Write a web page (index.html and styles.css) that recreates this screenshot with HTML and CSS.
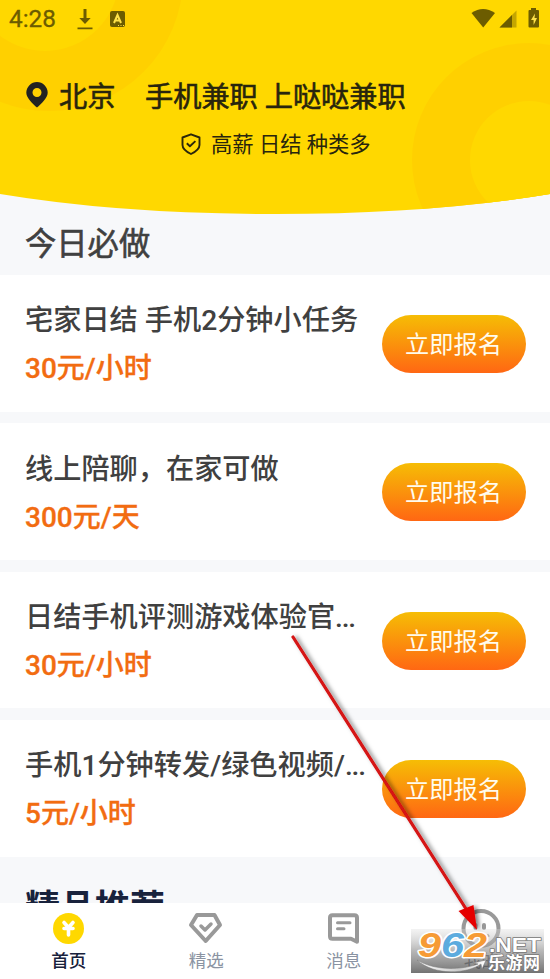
FILE: index.html
```html
<!DOCTYPE html>
<html lang="zh-CN">
<head>
<meta charset="utf-8">
<title>哒哒兼职</title>
<link rel="stylesheet" href="styles.css">
</head>
<body>
<div class="screen">
  <header class="hero">
    <svg class="hero-bg" viewBox="0 0 550 214" width="550" height="214">
      <defs><clipPath id="curve"><path d="M0 0H550V194Q430 214 275 214Q120 214 0 194Z"/></clipPath></defs>
      <g clip-path="url(#curve)">
        <rect width="550" height="214" fill="#ffd800"/>
        <circle cx="49" cy="-23" r="134" fill="#ffd000"/><circle cx="45" cy="-23" r="74" fill="#ffd800"/>
        <circle cx="529" cy="160" r="117" fill="#ffd000"/><circle cx="529" cy="160" r="59" fill="#ffd800"/>
      </g>
    </svg>
    <div class="status">
      <span class="clock">4:28</span>
      <svg class="download" width="16" height="21" viewBox="0 0 16 21" fill="#6c5c00"><path d="M6.500 0h3v9h4.200L8 15 2.300 9h4.200zM.5 18.500h15v1.700H.5z"/></svg>
      <svg class="badge" width="15" height="17" viewBox="0 0 15 17"><rect width="15" height="16" rx="2" fill="#6c5c00"/><path d="M4 12 7.500 4l3.500 8M5.200 9.500h4.600" fill="none" stroke="#ffe34a" stroke-width="2"/><path d="M8 14.500h1M10.500 14.500h1M13 14.500h1" stroke="#ffe34a"/></svg>
      <svg class="signals" width="70" height="21" viewBox="0 0 70 21" fill="#6c5c00"><path d="M.500 5Q12-3 24 5L12.200 19.500z"/><path opacity=".4" d="M28.500 19.500 45.500 2.500v17z"/><path d="M28.500 19.500 41 7v12.500z"/><path d="M60 0h5v2h2q1 0 1 1v15.500q0 1-1 1h-8.500q-1 0-1-1V3q0-1 1-1H60z"/><path d="M64 5.500 60 12h2.600v5l3.400-7h-2.500z" fill="#ffe34a"/></svg>
    </div>
    <div class="headline">
      <svg class="pin" width="22" height="26" viewBox="0 0 22 26"><path fill="#222" fill-rule="evenodd" d="M11 0a10.700 10.700 0 0 1 10.700 10.700C21.700 16 15 22 11 25.500 7 22 .3 16 .3 10.700A10.700 10.700 0 0 1 11 0zm0 6a4.500 4.500 0 1 0 0 9 4.500 4.500 0 0 0 0-9z"/></svg>
      <span class="city">北京</span><span class="slogan">手机兼职 上哒哒兼职</span>
    </div>
    <div class="subline">
      <svg width="20" height="22" viewBox="0 0 20 22" fill="none" stroke="#2b270b" stroke-width="1.900" stroke-linejoin="round"><path d="M10 1.300 18.500 4.500V12c0 4-4 6.800-8.500 9C5.500 18.800 1.500 16 1.500 12V4.500z"/><path d="m5.800 10.300 3.100 3 5.500-5.200"/></svg>
      <span>高薪 日结 种类多</span>
    </div>
  </header>
  <main>
    <h2 class="section">今日必做</h2>
    <div class="jobs">
      <article class="job"><div class="info"><h3>宅家日结 手机2分钟小任务</h3><p>30元/小时</p></div><button>立即报名</button></article>
      <article class="job"><div class="info"><h3>线上陪聊，在家可做</h3><p>300元/天</p></div><button>立即报名</button></article>
      <article class="job"><div class="info"><h3>日结手机评测游戏体验官<span class="dots">...</span></h3><p>30元/小时</p></div><button>立即报名</button></article>
      <article class="job"><div class="info"><h3>手机1分钟转发/绿色视频/<span class="dots">...</span></h3><p>5元/小时</p></div><button>立即报名</button></article>
    </div>
    <h2 class="featured">精品推荐</h2>
  </main>
  <nav class="tabs">
    <div class="tab active"><svg width="40" height="40" viewBox="0 0 40 40"><circle cx="19.500" cy="20.500" r="15.500" fill="#ffd800"/><path d="m15 14.500 4.500 5 4.500-5M15 20.500h9M19.500 20v7" fill="none" stroke="#fff" stroke-width="3.600" stroke-linecap="round"/></svg><span>首页</span></div>
    <div class="tab"><svg width="40" height="40" viewBox="0 0 40 40" fill="none" stroke="#999" stroke-width="4" stroke-linejoin="round"><path d="M11 7h17.500L34 17 19.700 33 5 17z"/><path d="m15 18 4 4 6-6" stroke-linecap="round" stroke-width="3.500"/></svg><span>精选</span></div>
    <div class="tab"><svg width="40" height="40" viewBox="0 0 40 40" fill="none" stroke="#999" stroke-width="4" stroke-linejoin="round"><path d="M8.500 7.200h22q2.500 0 2.500 2.500v24l-6-3H8.500Q6 30.700 6 28.200V9.700q0-2.500 2.500-2.500z"/><path d="M13.500 14.800h12.500M13.500 20.800h6.500" stroke-linecap="round" stroke-width="3"/></svg><span>消息</span></div>
    <div class="tab"><svg width="40" height="40" viewBox="0 0 40 40" fill="none" stroke="#999" stroke-width="4"><circle cx="20" cy="20.500" r="17.500"/><path d="M14.500 17v3M23 17v3" stroke-linecap="round"/><path d="M12 27q8 6 16 0" stroke-width="3"/></svg><span class="mine">我的</span></div>
  </nav>
  <svg class="overlay" width="550" height="979" viewBox="0 0 550 979">
    <defs>
      <linearGradient id="fade" x2="0" y2="1"><stop stop-color="#ddd" stop-opacity=".35"/><stop offset=".5" stop-color="#909090" stop-opacity=".65"/><stop offset="1" stop-color="#505050" stop-opacity=".8"/></linearGradient>
      <filter id="shadow" x="-20%" y="-20%" width="150%" height="150%"><feDropShadow dx="3" dy="1" stdDeviation="2" flood-color="#000" flood-opacity=".5"/></filter>
      <linearGradient id="swoosh"><stop stop-color="#fff"/><stop offset=".6" stop-color="#ccc"/><stop offset="1" stop-color="#fff"/></linearGradient>
    </defs>
    <g filter="url(#shadow)"><path d="M293 637 468 912" stroke="#d51212" stroke-width="3.200" stroke-linecap="round"/><path d="M458.500 911 473.500 905 477 930z" fill="#e50000"/></g>
    <rect x="411" y="929" width="133" height="44" fill="url(#fade)"/>
    <g class="mark">
      <g class="halo"><text x="418" y="957" textLength="23" lengthAdjust="spacingAndGlyphs" class="orange">9</text>
      <text x="441" y="957" textLength="23" lengthAdjust="spacingAndGlyphs" class="blue">6</text>
      <text x="464" y="957" textLength="23" lengthAdjust="spacingAndGlyphs" class="orange">2</text></g>
      <text x="489" y="952" class="net" textLength="52" lengthAdjust="spacingAndGlyphs">.NET</text>
      <path d="M417 960c17 16 50 14 64 4l1 5 4-9-13 3 5 1c-16 6-43 7-61-4z" fill="url(#swoosh)" stroke="#777" stroke-width=".5"/>
      <text x="488" y="969" class="site" textLength="52">乐游网</text>
    </g>
  </svg>
</div>
</body>
</html>
```
FILE: styles.css
```css
* { box-sizing: border-box; }
body { margin: 0; }
h2, h3, p { margin: 0; }
.screen {
  position: relative;
  display: flex;
  flex-direction: column;
  width: 550px;
  height: 979px;
  overflow: hidden;
  background: #f7f8fa;
  color: #404040;
  font-family: Roboto, "Noto Sans CJK SC", sans-serif;
}
.hero { position: relative; height: 214px; flex: none; color: #28250d; }
.hero-bg { position: absolute; inset: 0; }
.status, .headline, .subline { position: relative; display: flex; align-items: center; }
.status { height: 38px; padding: 0 9px 0 9px; color: #6c5c00; }
.clock { width: 68px; font-size: 24.300px; line-height: 38px; -webkit-text-stroke: .3px #6c5c00; }
.download { margin-top: 0; }
.badge { margin-left: 17px; margin-top: 0; }
.signals { margin-left: auto; margin-top: -1px; }
.headline { height: 40px; margin-top: 36px; padding-left: 26px; font-size: 28.200px; -webkit-text-stroke: .6px #28250d; white-space: pre; }
.city { width: 86px; margin-left: 11px; }
.pin { margin-top: 2px; }
.subline { height: 30px; margin-top: 13px; padding-left: 181px; gap: 10px; font-size: 21.300px; }
.subline svg { margin-top: 3px; }
main { flex: none; height: 689px; overflow: hidden; }
.section { height: 61px; padding-left: 25px; font-size: 31.300px; line-height: 62px; font-weight: 400; -webkit-text-stroke: .6px #404040; }
.jobs { display: grid; gap: 11.700px; }
.job { display: flex; align-items: center; justify-content: space-between; height: 136.700px; padding: 1px 24.500px 0 25px; background: #fff; }
.info { white-space: nowrap; padding-top: 3px; }
.info h3, .info p { height: 48px; line-height: 48px; font-size: 28.200px; font-weight: 500; }
.info p { color: #f26c11; font-size: 28px; -webkit-text-stroke: .3px #f26c11; }
.dots { letter-spacing: -1.200px; }
.job button { flex: none; width: 144px; height: 58px; padding: 0; border: 0; border-radius: 29px; background: linear-gradient(#f6bd05, #ff6713); color: #fffbed; font: 24.200px/60px Roboto, "Noto Sans CJK SC", sans-serif; }
.featured { padding: 27px 0 0 25px; font-size: 35px; line-height: 50px; font-weight: 700; color: #18223c; }
.tabs { display: grid; grid-template-columns: repeat(4, 1fr); height: 76px; flex: none; background: #fff; }
.tab { display: flex; flex-direction: column; align-items: center; padding-top: 5px; color: #8a93a2; font-size: 17.500px; line-height: 27px; }
.active { color: #18223c; font-weight: 500; }
.mine { color: #5d626b; }
.overlay { position: absolute; inset: 0; }
.mark text { paint-order: stroke; stroke-linejoin: round; font-weight: 700; }
.halo { font-family: "Liberation Sans", sans-serif; font-style: italic; font-size: 35px; stroke: #fff; stroke-width: 3px; }
.orange { fill: #f69b35; }
.blue { fill: #5cabde; }
.net { font-size: 20px; font-family: "Liberation Sans", sans-serif; fill: #fff; stroke: #777; stroke-width: 1.500px; }
.site { font-size: 17px; fill: #fff; stroke: #777; stroke-width: 1.500px; }
```
